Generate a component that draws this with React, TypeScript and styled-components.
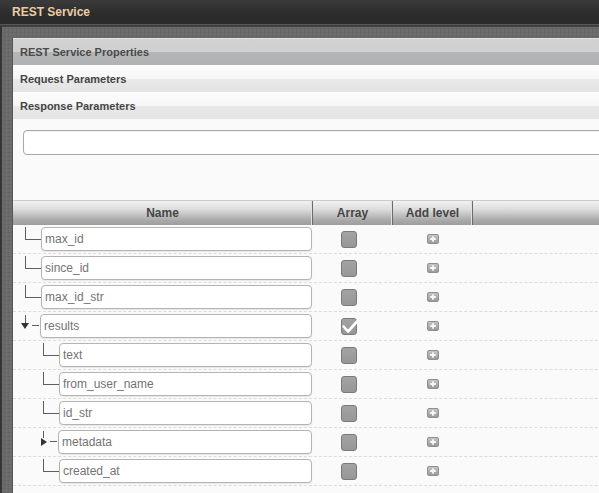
import React from 'react';
import styled, { createGlobalStyle } from 'styled-components';

const GlobalStyle = createGlobalStyle`
  html, body {
    margin: 0;
    padding: 0;
    overflow: hidden;
    background: #6c6c6c;
  }
  body {
    font-family: "Liberation Sans", Arial, Helvetica, sans-serif;
  }
`;

const Window = styled.div`
  width: 599px;
  height: 493px;
  overflow: hidden;
  display: flex;
  flex-direction: column;
  background-color: #6d6d6d;
  background-image:
    repeating-linear-gradient(0deg, rgba(0, 0, 0, 0.05) 0 1px, transparent 1px 4px),
    repeating-linear-gradient(90deg, rgba(0, 0, 0, 0.05) 0 1px, transparent 1px 4px);
`;

const TitleBar = styled.div`
  flex: none;
  height: 25px;
  box-sizing: border-box;
  padding: 0 12px;
  display: flex;
  align-items: center;
  background: linear-gradient(#3b3b3b, #2c2c2c 60%, #2b2b2b);
  border-bottom: 1px solid #575757;
  box-shadow: 0 2px 0 #3e3e3e;
  color: #eccba3;
  font-size: 12px;
  font-weight: bold;
`;

const Body = styled.div`
  flex: 1;
  display: flex;
  padding: 12px 0 0 11px;
  margin-top: 1px;
  border-left: 2px solid #363636;
  box-sizing: border-box;
  min-height: 0;
`;

const Panel = styled.div`
  flex: none;
  width: 720px;
  margin-left: -1px;
  background: #fafafa;
  border-left: 1px solid #555;
  display: flex;
  flex-direction: column;
`;

const SectionHeader = styled.div<{ $active?: boolean }>`
  height: 27px;
  box-sizing: border-box;
  padding-left: 7px;
  display: flex;
  align-items: center;
  font-size: 11px;
  font-weight: bold;
  color: ${({ $active }) => ($active ? '#4a4a4a' : '#454545')};
  border-top: 1px solid ${({ $active }) => ($active ? '#e2e2e2' : '#ffffff')};
  background: ${({ $active }) =>
    $active
      ? 'linear-gradient(#d1d2d1 0%, #cfd0cf 50%, #b4b5b6 52%, #b1b2b3 100%)'
      : 'linear-gradient(#fcfcfc 0%, #f6f6f6 50%, #e9e9e9 52%, #e3e3e3 100%)'};
`;

const Content = styled.div`
  height: 81px;
  box-sizing: border-box;
  padding: 11px 0 0 10px;
`;

const SearchField = styled.div`
  width: 640px;
  height: 25px;
  box-sizing: border-box;
  background: #fff;
  border: 1px solid #a9a9a9;
  border-radius: 4px;
  box-shadow: inset 0 1px 1px rgba(0, 0, 0, 0.06);
`;

const COLS = '300px 80px 80px 1fr';

const HeaderRow = styled.div`
  display: grid;
  grid-template-columns: ${COLS};
  height: 25px;
  box-sizing: border-box;
  border-top: 1px solid #cbcbcb;
  background: linear-gradient(#f2f2f2, #dcdcdc 35%, #a9a9a9 80%, #9d9d9d);
`;

const HeaderCell = styled.div<{ $last?: boolean }>`
  display: flex;
  align-items: center;
  justify-content: center;
  font-size: 12px;
  font-weight: bold;
  color: #454545;
  border-right: ${({ $last }) => ($last ? 'none' : '1px solid #6a6a6a')};
  box-shadow: ${({ $last }) => ($last ? 'none' : 'inset -1px 0 0 #e0e0e0')};
`;

const Row = styled.div`
  display: grid;
  grid-template-columns: ${COLS};
  height: 29px;
  box-sizing: border-box;
  border-bottom: 1px dashed #dcdcdc;
`;

const NameCell = styled.div`
  display: flex;
  align-items: flex-start;
  padding-right: 1px;
`;

const Connector = styled.div<{ $level: number }>`
  flex: none;
  width: 15px;
  height: 12px;
  margin: 2px 0 0 ${({ $level }) => 12 + $level * 18}px;
  border-left: 1px solid #5e5e5e;
  border-bottom: 1px solid #5e5e5e;
`;

const Toggle = styled.div<{ $level: number }>`
  flex: none;
  display: flex;
  align-items: center;
  height: 28px;
  width: 19px;
  margin-left: ${({ $level }) => 8 + $level * 18}px;
`;

const Stem = styled.div<{ $open?: boolean }>`
  flex: none;
  width: 8px;
  display: flex;
  flex-direction: column;
  align-items: center;
  align-self: flex-start;
  margin-top: 3px;
  &::before {
    content: '';
    width: 1px;
    height: ${({ $open }) => ($open ? 8 : 7)}px;
    background: #5e5e5e;
  }
`;

const Arrow = styled.div<{ $open?: boolean }>`
  width: 0;
  height: 0;
  ${({ $open }) =>
    $open
      ? 'border-left: 4px solid transparent; border-right: 4px solid transparent; border-top: 6px solid #333;'
      : 'border-top: 4px solid transparent; border-bottom: 4px solid transparent; border-left: 6px solid #333; margin-left: 2px;'}
`;

const Dash = styled.div`
  flex: none;
  width: 7px;
  height: 1px;
  margin: -2px 0 0 3px;
  background: #5e5e5e;
`;

const NameInput = styled.div`
  flex: 1;
  height: 24px;
  margin-top: 2px;
  box-sizing: border-box;
  padding-left: 3px;
  display: flex;
  align-items: center;
  background: #fff;
  border: 1px solid #b4b4b4;
  border-radius: 4px;
  box-shadow: 0 1px 1px rgba(0, 0, 0, 0.08);
  font-size: 12px;
  color: #747474;
`;

const ArrayCell = styled.div`
  display: flex;
  align-items: center;
  padding-left: 28px;
`;

const Check = styled.div`
  position: relative;
  width: 16px;
  height: 17px;
  box-sizing: border-box;
  background: linear-gradient(#a3a3a3, #979797);
  border: 1px solid #7a7a7a;
  border-radius: 3px;
`;

const CheckMarkIcon = styled.svg`
  position: absolute;
  left: 0;
  top: -1px;
  overflow: visible;
`;

const AddCell = styled.div`
  display: flex;
  align-items: center;
  justify-content: center;
`;

const AddButton = styled.div`
  width: 12px;
  height: 10px;
  box-sizing: border-box;
  border-radius: 2px;
  background: linear-gradient(#c4c4c4, #9a9a9a);
  border: 1px solid #8f8f8f;
  display: flex;
  align-items: center;
  justify-content: center;
`;

type Field = {
  name: string;
  level: number;
  array?: boolean;
  toggle?: 'open' | 'closed';
};

const fields: Field[] = [
  { name: 'max_id', level: 0 },
  { name: 'since_id', level: 0 },
  { name: 'max_id_str', level: 0 },
  { name: 'results', level: 0, array: true, toggle: 'open' },
  { name: 'text', level: 1 },
  { name: 'from_user_name', level: 1 },
  { name: 'id_str', level: 1 },
  { name: 'metadata', level: 1, toggle: 'closed' },
  { name: 'created_at', level: 1 },
];

const CheckMark = () => (
  <CheckMarkIcon width="17" height="16" viewBox="0 0 17 16">
    <path d="M1.5 8.5 L6 13.5 L16.5 2" fill="none" stroke="#fff" strokeWidth="2.6" strokeLinecap="round" strokeLinejoin="round" />
  </CheckMarkIcon>
);

const Plus = () => (
  <svg width="8" height="8" viewBox="0 0 8 8">
    <path d="M4 1.2 V6.8 M1.2 4 H6.8" stroke="#f4f8ff" strokeWidth="1.8" />
  </svg>
);

const FieldRow = ({ field }: { field: Field }) => (
  <Row>
    <NameCell>
      {field.toggle ? (
        <Toggle $level={field.level}>
          <Stem $open={field.toggle === 'open'}>
            <Arrow $open={field.toggle === 'open'} />
          </Stem>
          <Dash />
        </Toggle>
      ) : (
        <Connector $level={field.level} />
      )}
      <NameInput>{field.name}</NameInput>
    </NameCell>
    <ArrayCell>
      <Check>{field.array && <CheckMark />}</Check>
    </ArrayCell>
    <AddCell>
      <AddButton>
        <Plus />
      </AddButton>
    </AddCell>
    <div />
  </Row>
);

export default function App() {
  return (
    <>
      <GlobalStyle />
      <Window>
        <TitleBar>REST Service</TitleBar>
        <Body>
          <Panel>
            <SectionHeader $active>REST Service Properties</SectionHeader>
            <SectionHeader>Request Parameters</SectionHeader>
            <SectionHeader>Response Parameters</SectionHeader>
            <Content>
              <SearchField />
            </Content>
            <HeaderRow>
              <HeaderCell>Name</HeaderCell>
              <HeaderCell>Array</HeaderCell>
              <HeaderCell>Add level</HeaderCell>
              <HeaderCell $last />
            </HeaderRow>
            {fields.map((f) => (
              <FieldRow key={f.name} field={f} />
            ))}
          </Panel>
        </Body>
      </Window>
    </>
  );
}
